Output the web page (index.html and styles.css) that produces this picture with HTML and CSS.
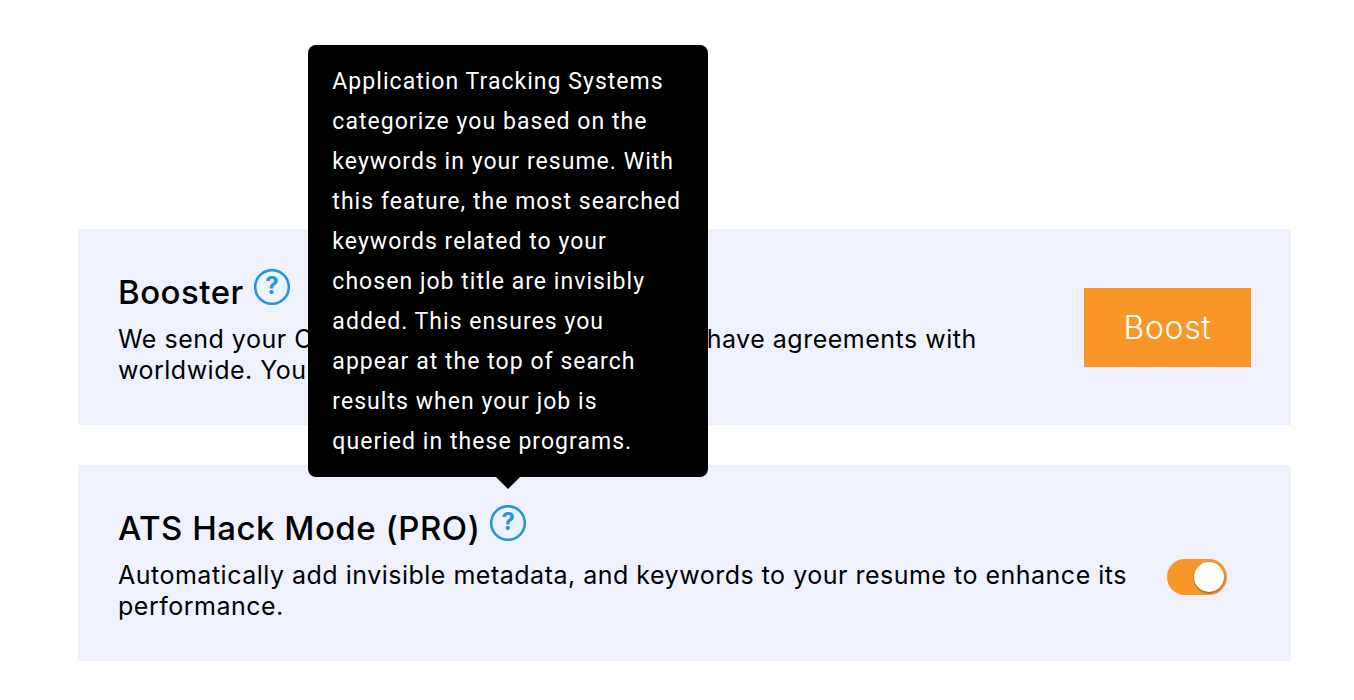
FILE: index.html
```html
<!DOCTYPE html>
<html lang="en">
<head>
<meta charset="utf-8">
<title>Resume settings</title>
<link rel="stylesheet" href="styles.css">
</head>
<body>
<main class="list">
  <section class="card">
    <div class="info">
      <div class="head">
        <h2 class="title">Booster</h2>
        <span class="help">
          <svg class="help-icon" viewBox="0 0 36 36"><circle cx="18" cy="18" r="16.8"/></svg>
          <span class="help-mark">?</span>
        </span>
      </div>
      <p class="desc">We send your Online resume to all agencies we have agreements with worldwide. You can boost once per resume.</p>
    </div>
    <button class="boost">Boost</button>
  </section>
  <section class="card">
    <div class="info">
      <div class="head">
        <h2 class="title">ATS Hack Mode (PRO)</h2>
        <span class="help">
          <svg class="help-icon" viewBox="0 0 36 36"><circle cx="18" cy="18" r="16.8"/></svg>
          <span class="help-mark">?</span>
          <span class="tooltip">Application Tracking Systems categorize you based on the keywords in your resume. With this feature, the most searched keywords related to your chosen job title are invisibly added. This ensures you appear at the top of search results when your job is queried in these programs.</span>
        </span>
      </div>
      <p class="desc">Automatically add invisible metadata, and keywords to your resume to enhance its performance.</p>
    </div>
    <span class="toggle"><span class="knob"></span></span>
  </section>
</main>
</body>
</html>
```
FILE: styles.css
```css
* { box-sizing: border-box; }
html, body { margin: 0; height: 700px; overflow: hidden; background: #fff; }
body { font-family: Inter, "Liberation Sans", sans-serif; color: #000; }
.list { display: flex; flex-direction: column; gap: 40px; padding: 229px 63px 0 78px; }
.card { height: 196px; background: #eff1fd; padding: 40px; display: flex; align-items: center; justify-content: space-between; gap: 16px; }
.info { flex: 1; min-width: 0; margin-top: 1px; }
.head { display: flex; align-items: flex-start; gap: 10px; height: 55px; }
.title { margin: 0; font-size: 33px; line-height: 46px; font-weight: 500; letter-spacing: 0.5px; }
.desc { margin: 0; font-size: 25px; line-height: 31px; letter-spacing: 0.5px; }
.help { position: relative; display: block; width: 36px; height: 36px; margin-top: 0; }
.help-icon { display: block; width: 36px; height: 36px; fill: none; stroke: #2396de; stroke-width: 2.6; }
.help-mark { position: absolute; inset: 0; text-align: center; font-size: 24px; line-height: 34px; font-weight: 700; color: #2396de; }
.tooltip { position: absolute; left: 50%; bottom: 64px; transform: translateX(-50%); width: 400px; padding: 17px 24px 15px; background: #000; color: #fff; border-radius: 8px; font-family: Roboto, sans-serif; font-size: 23px; line-height: 40px; letter-spacing: 1.04px; }
.tooltip::after { content: ""; position: absolute; left: 50%; top: 100%; margin-left: -12px; border: 12px solid transparent; border-top-color: #000; border-bottom: 0; }
.boost { flex: none; width: 167px; height: 79px; border: 0; background: #f89727; color: #fff; font-family: Inter, sans-serif; font-size: 32px; font-weight: 300; letter-spacing: 0.6px; padding: 0; }
.toggle { display: block; width: 60px; height: 36px; margin: 28px 24px 0 0; border-radius: 18px; background: #f89727; position: relative; flex: none; }
.knob { position: absolute; top: 3px; right: 3px; width: 30px; height: 30px; border-radius: 50%; background: #fff; box-shadow: 0 1px 2px rgba(0, 0, 0, 0.45); }
```
